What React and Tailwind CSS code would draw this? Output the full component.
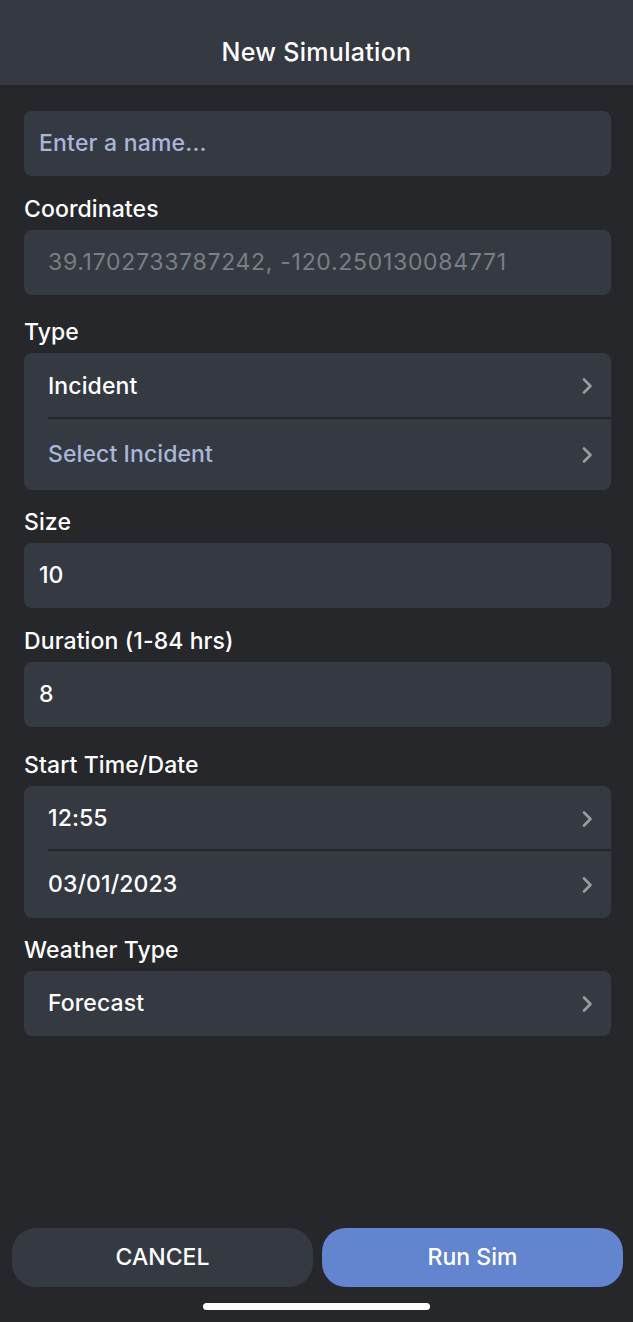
import React from "react";

function Chevron() {
  return (
    <svg width="12" height="18" viewBox="0 0 12 18" fill="none" className="shrink-0">
      <path d="M3 2.5 L9.5 9 L3 15.5" stroke="#9a9ca1" strokeWidth="2.6" strokeLinecap="round" strokeLinejoin="round" />
    </svg>
  );
}

function Label({ children, mt }) {
  return (
    <div className={`${mt} h-[24px] px-[24px] text-[23px] font-medium text-white leading-[24px] tracking-[0.1px]`}>
      {children}
    </div>
  );
}

function Row({ children, color = "text-white", divider, h = "h-[66px]" }) {
  return (
    <div className={`relative flex items-center justify-between pl-[24px] pr-[18px] ${h}`}>
      <span className={`text-[23px] font-medium ${color} tracking-[0.1px]`}>{children}</span>
      <Chevron />
      {divider && <div className="absolute left-[24px] right-0 bottom-0 h-[2px] bg-[#24262a]" />}
    </div>
  );
}

function Box({ children }) {
  return (
    <div className="pl-[24px] pr-[22px] mt-[9px]">
      <div className="rounded-[8px] bg-[#353941] flex flex-col overflow-hidden">{children}</div>
    </div>
  );
}

export default function App() {
  return (
    <div
      className="w-[633px] h-[1322px] bg-[#26272a] flex flex-col overflow-hidden"
      style={{ fontFamily: "Inter, 'Noto Sans', sans-serif" }}
    >
      <div className="h-[85px] bg-[#353941] flex justify-center pt-[37px] shrink-0">
        <span className="text-[25px] leading-[30px] font-medium text-white tracking-[0.3px]">New Simulation</span>
      </div>

      <div className="pl-[24px] pr-[22px] pt-[26px]">
        <div className="h-[65px] rounded-[8px] bg-[#353941] flex items-center px-[15px]">
          <span className="text-[23px] font-medium text-[#a9b6d8] tracking-[0.2px]">Enter a name...</span>
        </div>
      </div>

      <Label mt="mt-[21px]">Coordinates</Label>
      <Box>
        <div className="h-[65px] flex items-center px-[24px]">
          <span className="text-[23px] text-[#7b7e85] tracking-[0.7px]">39.1702733787242, -120.250130084771</span>
        </div>
      </Box>

      <Label mt="mt-[25px]">Type</Label>
      <Box>
        <Row divider>Incident</Row>
        <Row color="text-[#a9b6d8]" h="h-[71px]">Select Incident</Row>
      </Box>

      <Label mt="mt-[20px]">Size</Label>
      <Box>
        <div className="h-[65px] flex items-center px-[15px]">
          <span className="text-[23px] font-medium text-white">10</span>
        </div>
      </Box>

      <Label mt="mt-[21px]">Duration (1-84 hrs)</Label>
      <Box>
        <div className="h-[65px] flex items-center px-[15px]">
          <span className="text-[23px] font-medium text-white">8</span>
        </div>
      </Box>

      <Label mt="mt-[26px]">Start Time/Date</Label>
      <Box>
        <Row divider h="h-[65px]">12:55</Row>
        <Row h="h-[67px]">03/01/2023</Row>
      </Box>

      <Label mt="mt-[20px]">Weather Type</Label>
      <Box>
        <Row h="h-[65px]">Forecast</Row>
      </Box>

      <div className="flex-1" />

      <div className="flex gap-[9px] pl-[12px] pr-[10px] mt-[10px]">
        <button className="flex-1 h-[59px] rounded-[24px] bg-[#353941] text-white text-[23px] font-medium">CANCEL</button>
        <button className="flex-1 h-[59px] rounded-[24px] bg-[#6384cf] text-white text-[23px] font-medium">Run Sim</button>
      </div>
      <div className="flex justify-center mt-[16px] mb-[12px]">
        <div className="w-[227px] h-[7px] rounded-full bg-white" />
      </div>
    </div>
  );
}
